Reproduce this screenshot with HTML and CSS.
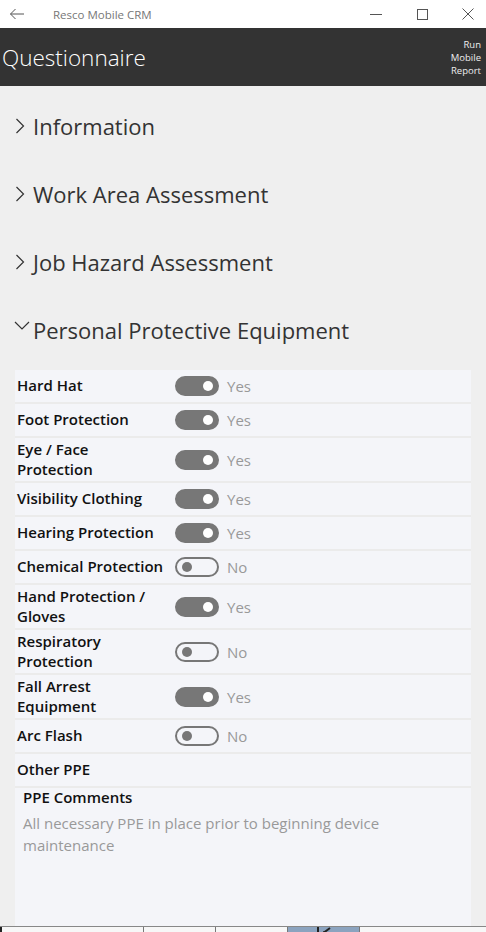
FILE: index.html
```html
<!DOCTYPE html>
<html lang="en">
<head>
  <meta charset="UTF-8" />
  <title>Resco Mobile CRM</title>
  <link rel="stylesheet" href="styles.css">
</head>
<body>
  <!-- Window title bar -->
  <div class="titlebar">
    <svg class="back" width="16" height="12" viewBox="0 0 16 12"><path d="M15 6H1.5M6.5 1L1.5 6l5 5" fill="none" stroke="#555" stroke-width="1"/></svg>
    <span class="apptitle">Resco Mobile CRM</span>
    <div class="winctl">
      <svg width="14" height="14" viewBox="0 0 14 14"><path d="M1 7.5h12" stroke="#555" stroke-width="1"/></svg>
      <svg width="14" height="14" viewBox="0 0 14 14"><rect x="2.5" y="2.5" width="10" height="10" fill="none" stroke="#555" stroke-width="1"/></svg>
      <svg width="14" height="14" viewBox="0 0 14 14"><path d="M1.5 1.5l11 11M12.5 1.5l-11 11" stroke="#555" stroke-width="1"/></svg>
    </div>
  </div>

  <!-- App bar -->
  <div class="appbar">
    <h1>Questionnaire</h1>
    <div class="report">Run<br>Mobile<br>Report</div>
  </div>

  <div class="content">
    <div class="group">
      <svg class="chev" width="10" height="16" viewBox="0 0 10 16"><path d="M1.5 1l7 7-7 7" fill="none" stroke="#333" stroke-width="1.2"/></svg>
      <span>Information</span>
    </div>
    <div class="group">
      <svg class="chev" width="10" height="16" viewBox="0 0 10 16"><path d="M1.5 1l7 7-7 7" fill="none" stroke="#333" stroke-width="1.2"/></svg>
      <span>Work Area Assessment</span>
    </div>
    <div class="group">
      <svg class="chev" width="10" height="16" viewBox="0 0 10 16"><path d="M1.5 1l7 7-7 7" fill="none" stroke="#333" stroke-width="1.2"/></svg>
      <span>Job Hazard Assessment</span>
    </div>
    <div class="group open">
      <svg class="chev down" width="16" height="16" viewBox="0 0 16 16"><path d="M1 4l7 7 7-7" fill="none" stroke="#333" stroke-width="1.2"/></svg>
      <span>Personal Protective Equipment</span>
    </div>

    <div class="card">
      <div class="row"><div class="label">Hard Hat</div><div class="toggle on"></div><span class="val">Yes</span></div>
      <div class="row"><div class="label">Foot Protection</div><div class="toggle on"></div><span class="val">Yes</span></div>
      <div class="row"><div class="label">Eye / Face Protection</div><div class="toggle on"></div><span class="val">Yes</span></div>
      <div class="row"><div class="label">Visibility Clothing</div><div class="toggle on"></div><span class="val">Yes</span></div>
      <div class="row"><div class="label">Hearing Protection</div><div class="toggle on"></div><span class="val">Yes</span></div>
      <div class="row"><div class="label">Chemical Protection</div><div class="toggle"></div><span class="val">No</span></div>
      <div class="row"><div class="label">Hand Protection / Gloves</div><div class="toggle on"></div><span class="val">Yes</span></div>
      <div class="row"><div class="label">Respiratory Protection</div><div class="toggle"></div><span class="val">No</span></div>
      <div class="row"><div class="label">Fall Arrest Equipment</div><div class="toggle on"></div><span class="val">Yes</span></div>
      <div class="row"><div class="label">Arc Flash</div><div class="toggle"></div><span class="val">No</span></div>
      <div class="row"><div class="label">Other PPE</div></div>
      <div class="comments">
        <div class="clabel">PPE Comments</div>
        <p>All necessary PPE in place prior to beginning device maintenance</p>
      </div>
    </div>
  </div>

  <!-- Bottom tab bar (mostly off screen) -->
  <div class="tabbar">
    <div class="tab first"></div>
    <div class="tab"></div>
    <div class="tab"></div>
    <div class="tab active">
      <svg width="20" height="8" viewBox="0 0 20 8"><path d="M4 0v8M16 1l-8 6M9 5l8 3" stroke="#222" stroke-width="2" fill="none"/></svg>
    </div>
    <div class="tab last"></div>
  </div>
</body>
</html>
```

FILE: styles.css
```css
body {
  margin: 0;
  height: 932px;
  overflow: hidden;
  font-family: 'Open Sans', 'Noto Sans', sans-serif;
  background: #efefef;
  color: #111;
}

.titlebar {
  height: 28px;
  background: white;
  display: flex;
  align-items: center;
}

.back {
  margin-left: 9px;
}

.apptitle {
  margin-left: 28px;
  font-size: 11.5px;
  color: #777;
}

.winctl {
  margin-left: auto;
  display: flex;
  gap: 32px;
  margin-right: 11px;
}

.appbar {
  height: 58px;
  background: #333;
  display: flex;
  align-items: center;
  justify-content: space-between;
}

.appbar h1 {
  margin: 1px 0 0 2px;
  font-size: 22.5px;
  font-weight: 300;
  color: white;
}

.report {
  font-size: 9.5px;
  line-height: 13px;
  color: #eee;
  text-align: right;
  margin-right: 5px;
  margin-top: 1px;
}

.content {
  height: 840px;
  padding-top: 6px;
  box-sizing: border-box;
}

.group {
  height: 68px;
  display: flex;
  align-items: center;
  font-size: 22px;
  font-weight: 400;
  color: #333;
}

.group .chev {
  margin-left: 15px;
  margin-right: 8px;
}

.group .chev.down {
  margin-left: 14px;
  margin-right: 3px;
  margin-top: -8px;
}

.card {
  margin: 6px 15px 0;
  background: #ebebeb;
  display: flex;
  flex-direction: column;
  gap: 2px;
}

.row {
  min-height: 32px;
  padding: 2px 0;
  box-sizing: border-box;
  background: #f4f5f9;
  display: flex;
  align-items: center;
}

.label {
  width: 148px;
  padding-left: 2px;
  margin-right: 10px;
  font-size: 15px;
  font-weight: 600;
  line-height: 19.5px;
}

.toggle {
  width: 44px;
  height: 20px;
  border: 2px solid #777;
  border-radius: 10px;
  box-sizing: border-box;
  position: relative;
}

.toggle::after {
  content: "";
  position: absolute;
  top: 3px;
  left: 5px;
  width: 10px;
  height: 10px;
  border-radius: 50%;
  background: #777;
}

.toggle.on {
  background: #777;
}

.toggle.on::after {
  left: auto;
  right: 4px;
  background: white;
}

.val {
  margin-left: 8px;
  font-size: 15px;
  color: #999;
}

.comments {
  height: 138px;
  background: #f4f5f9;
  padding: 0 8px;
  box-sizing: border-box;
}

.clabel {
  font-size: 15px;
  font-weight: 600;
  line-height: 18px;
}

.comments p {
  margin: 6px 0 0;
  max-width: 380px;
  font-size: 15px;
  line-height: 22px;
  color: #999;
}

.tabbar {
  display: flex;
  height: 40px;
  border-top: 1px solid #888;
  background: #f7f7f7;
}

.tab {
  width: 71px;
  border-left: 1px solid #777;
  display: flex;
  justify-content: center;
}

.tab.first {
  width: 141px;
  border-left: 2px solid #222;
}

.tab.active {
  background: #8ba3bf;
}

.tab.last {
  flex: 1;
}
```
